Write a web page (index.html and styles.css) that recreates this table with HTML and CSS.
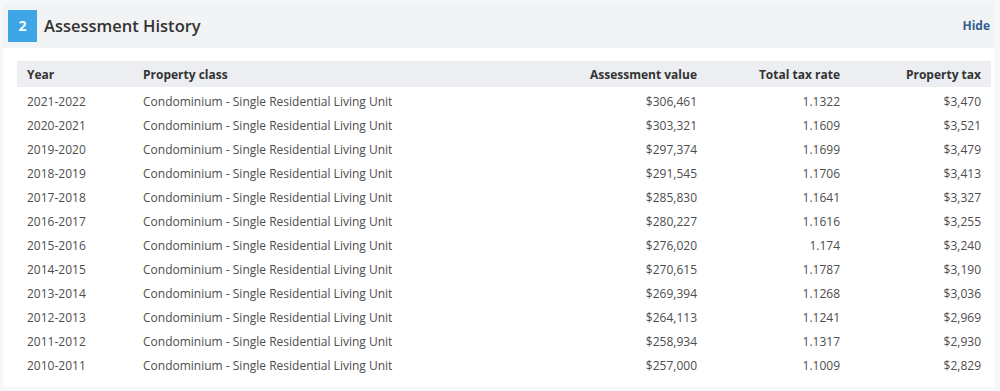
FILE: index.html
```html
<!DOCTYPE html>
<html lang="en">
<head>
  <meta charset="UTF-8" />
  <title>Assessment History</title>
  <link rel="stylesheet" href="styles.css">
</head>
<body>
  <section class="panel">
    <div class="panel-head">
      <span class="step">2</span>
      <h2 class="panel-title">Assessment History</h2>
      <a class="toggle" href="#">Hide</a>
    </div>
    <div class="panel-body">
      <table class="history">
        <colgroup>
          <col class="c-year">
          <col class="c-class">
          <col class="c-value">
          <col class="c-rate">
          <col class="c-tax">
        </colgroup>
        <thead>
          <tr>
            <th>Year</th>
            <th>Property class</th>
            <th class="num">Assessment value</th>
            <th class="num">Total tax rate</th>
            <th class="num">Property tax</th>
          </tr>
        </thead>
        <tbody>
          <tr><td>2021-2022</td><td>Condominium - Single Residential Living Unit</td><td class="num">$306,461</td><td class="num">1.1322</td><td class="num">$3,470</td></tr>
          <tr><td>2020-2021</td><td>Condominium - Single Residential Living Unit</td><td class="num">$303,321</td><td class="num">1.1609</td><td class="num">$3,521</td></tr>
          <tr><td>2019-2020</td><td>Condominium - Single Residential Living Unit</td><td class="num">$297,374</td><td class="num">1.1699</td><td class="num">$3,479</td></tr>
          <tr><td>2018-2019</td><td>Condominium - Single Residential Living Unit</td><td class="num">$291,545</td><td class="num">1.1706</td><td class="num">$3,413</td></tr>
          <tr><td>2017-2018</td><td>Condominium - Single Residential Living Unit</td><td class="num">$285,830</td><td class="num">1.1641</td><td class="num">$3,327</td></tr>
          <tr><td>2016-2017</td><td>Condominium - Single Residential Living Unit</td><td class="num">$280,227</td><td class="num">1.1616</td><td class="num">$3,255</td></tr>
          <tr><td>2015-2016</td><td>Condominium - Single Residential Living Unit</td><td class="num">$276,020</td><td class="num">1.174</td><td class="num">$3,240</td></tr>
          <tr><td>2014-2015</td><td>Condominium - Single Residential Living Unit</td><td class="num">$270,615</td><td class="num">1.1787</td><td class="num">$3,190</td></tr>
          <tr><td>2013-2014</td><td>Condominium - Single Residential Living Unit</td><td class="num">$269,394</td><td class="num">1.1268</td><td class="num">$3,036</td></tr>
          <tr><td>2012-2013</td><td>Condominium - Single Residential Living Unit</td><td class="num">$264,113</td><td class="num">1.1241</td><td class="num">$2,969</td></tr>
          <tr><td>2011-2012</td><td>Condominium - Single Residential Living Unit</td><td class="num">$258,934</td><td class="num">1.1317</td><td class="num">$2,930</td></tr>
          <tr><td>2010-2011</td><td>Condominium - Single Residential Living Unit</td><td class="num">$257,000</td><td class="num">1.1009</td><td class="num">$2,829</td></tr>
        </tbody>
      </table>
    </div>
  </section>
</body>
</html>
```

FILE: styles.css
```css
* {
  box-sizing: border-box;
  margin: 0;
  padding: 0;
}
body {
  background: #f6f7f9;
  font-family: 'Open Sans', sans-serif;
  color: #4d4d4d;
}
.panel {
  margin: 3px 6px 4px 3px;
  background: #fff;
}
.panel-head {
  height: 45px;
  display: flex;
  align-items: center;
  padding: 0 4px 0 5px;
  background: #f2f3f5;
}
.step {
  width: 29px;
  height: 32px;
  display: flex;
  align-items: center;
  justify-content: center;
  background: #3ea6e6;
  color: #fff;
  font-size: 14px;
  font-weight: 700;
}
.panel-title {
  flex: 1;
  margin-left: 7px;
  font-size: 16.5px;
  font-weight: 600;
  color: #333;
}
.toggle {
  font-size: 12px;
  font-weight: 700;
  color: #2f5f8f;
  text-decoration: none;
}
.panel-body {
  padding: 13px 3px 10px 14px;
}
.history {
  width: 100%;
  border-collapse: collapse;
  table-layout: fixed;
  font-size: 12px;
}
.c-year { width: 116px; }
.c-value { width: 190px; }
.c-rate { width: 143px; }
.c-tax { width: 141px; }
.history th {
  height: 26px;
  padding: 0 10px;
  background: #eceef1;
  text-align: left;
  font-weight: 700;
  color: #333;
}
.history td {
  height: 24px;
  padding: 0 10px;
  white-space: nowrap;
}
.history tbody tr:first-child td {
  height: 26px;
  padding-top: 2px;
}
.history .num {
  text-align: right;
}
```
